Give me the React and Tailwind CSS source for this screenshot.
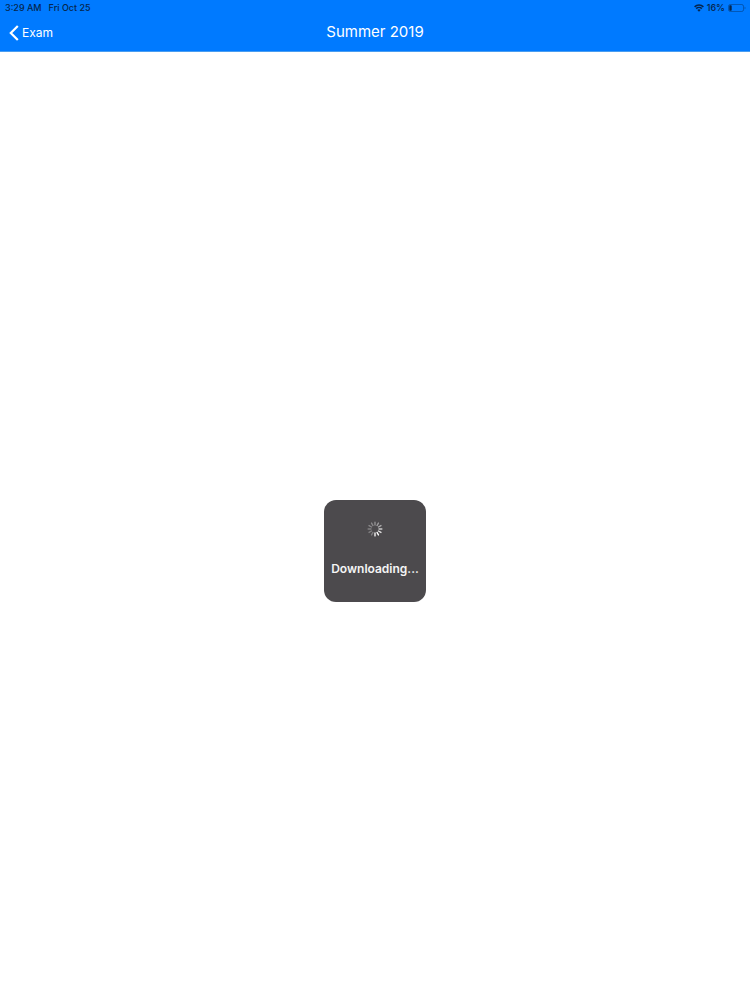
const spokes = [0.4, 0.45, 0.55, 0.7, 0.85, 1, 0.95, 0.3, 0.3, 0.3, 0.35, 0.35];

function WifiIcon() {
  return (
    <svg viewBox="0 0 20 15" className="h-2 w-[10px]" fill="none" stroke="currentColor" strokeWidth="3.1" aria-hidden="true">
      <path d="M1.2 5.2a12.5 12.5 0 0 1 17.6 0" />
      <path d="M4.4 8.8a8 8 0 0 1 11.2 0" />
      <path d="M10 15l-3.4-3.6a4.9 4.9 0 0 1 6.8 0z" fill="currentColor" stroke="none" />
    </svg>
  );
}

function BatteryIcon() {
  return (
    <svg viewBox="0 0 18 8" className="h-2 w-[18px]" aria-hidden="true">
      <rect x="0.5" y="0.5" width="15" height="7" rx="1.8" fill="none" stroke="currentColor" strokeOpacity="0.5" strokeWidth="0.8" />
      <rect x="1.3" y="1.3" width="2.4" height="5.4" rx="0.8" fill="currentColor" />
      <path d="M16.6 2.7a1.4 1.4 0 0 1 0 2.6z" fill="currentColor" fillOpacity="0.5" />
    </svg>
  );
}

function Spinner() {
  return (
    <svg viewBox="-10 -10 20 20" className="size-4" stroke="white" strokeWidth="1.7" strokeLinecap="round" aria-hidden="true">
      {spokes.map((opacity, i) => (
        <line key={i} x1="0" y1="-5" x2="0" y2="-8.6" strokeOpacity={opacity} transform={`rotate(${i * 30})`} />
      ))}
    </svg>
  );
}

export default function App() {
  return (
    <div className="flex min-h-screen flex-col bg-white font-['Inter',sans-serif]">
      <header className="border-b border-[#4a9df0] bg-[#007aff]">
        <div className="flex h-4 items-center justify-between pr-1 pl-[5px] text-[9px] font-medium text-[#06264d]">
          <div className="flex items-center gap-[7px]">
            <span>3:29 AM</span>
            <span>Fri Oct 25</span>
          </div>
          <div className="flex items-center gap-[3px]">
            <WifiIcon />
            <span>16%</span>
            <BatteryIcon />
          </div>
        </div>

        <nav className="grid h-[35px] grid-cols-3 items-center px-[9px] pb-[2px] text-white">
          <a href="#exam" className="flex items-center gap-[3px] justify-self-start text-[12px]">
            <svg viewBox="0 0 10 16" className="h-4 w-[10px]" fill="none" stroke="currentColor" strokeWidth="2.2" aria-hidden="true">
              <path d="M8.8 1L1.8 8l7 7" />
            </svg>
            Exam
          </a>
          <h1 className="justify-self-center text-[15px] whitespace-nowrap">Summer 2019</h1>
        </nav>
      </header>

      <main className="flex flex-1 items-center justify-center pt-[50px]">
        <div role="status" className="flex size-[102px] flex-col items-center gap-6 rounded-xl bg-[#4c4a4d] pt-[21px]">
          <Spinner />
          <p className="text-[12px] leading-4 font-semibold text-[#f5f5f5]">Downloading...</p>
        </div>
      </main>
    </div>
  );
}
